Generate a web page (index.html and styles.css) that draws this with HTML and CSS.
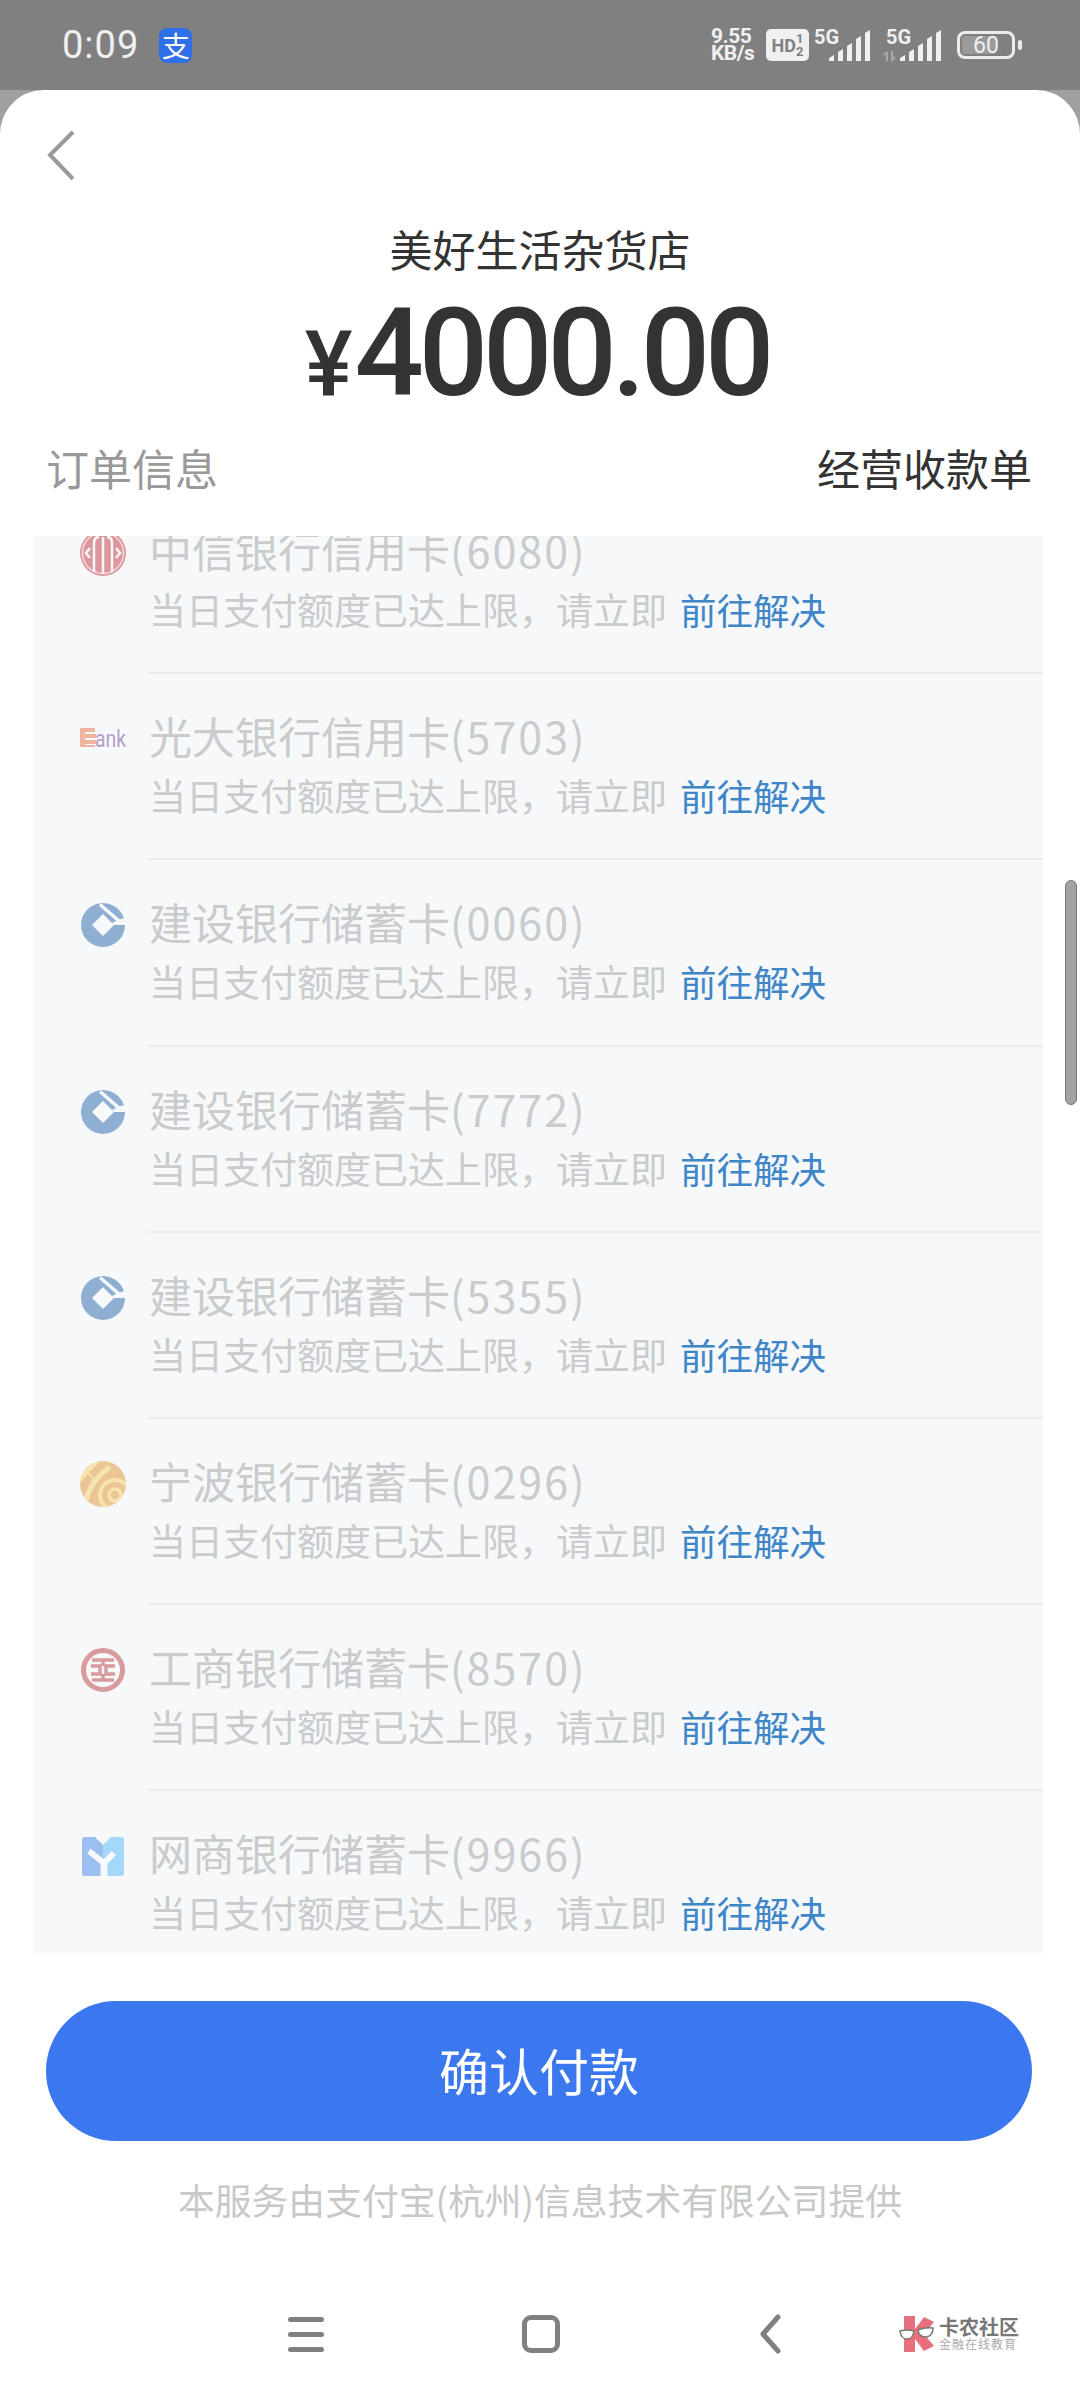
FILE: index.html
```html
<!DOCTYPE html>
<html lang="zh-CN">
<head>
    <meta charset="UTF-8">
    <meta name="viewport" content="width=device-width, initial-scale=1.0">
    <title>确认付款</title>
    <link rel="stylesheet" href="styles.css">
</head>
<body>
    <svg class="defs" width="0" height="0">
        <symbol id="ccb" viewBox="0 0 44 44">
            <circle cx="22" cy="22" r="22" fill="#8fafd2"/>
            <path d="M22 11 33 22 22 33 11 22Z" fill="#f7f8fa"/>
            <path d="M31 20 38 16.500 44 15V22H33Z" fill="#f7f8fa"/>
            <path d="M19 1.500 38 18" stroke="#f7f8fa" stroke-width="3.500" fill="none"/>
        </symbol>
        <clipPath id="nb-clip"><circle cx="23" cy="23" r="23"/></clipPath>
    </svg>

    <div class="status-bar">
        <span class="time">0:09</span>
        <span class="alipay">支</span>
        <div class="status-right">
            <div class="speed"><span>9.55</span><span>KB/s</span></div>
            <div class="hd"><span class="hd-text">HD</span><span class="hd-nums"><i>1</i><i>2</i></span></div>
            <svg class="signal" width="58" height="32" viewBox="0 0 58 32">
                <text x="0" y="15" class="five-g">5G</text>
                <path d="M15 32v-3l5-3v6zM24 32v-9l5-3v12zM33 32V17l5-3v18zM42 32V10l5-3v25zM51 32V4l5-3v31z" fill="#f0f0f0"/>
            </svg>
            <svg class="signal second" width="60" height="32" viewBox="0 0 60 32">
                <text x="3" y="15" class="five-g">5G</text>
                <path d="M4 32V23M1 26l3-3M9 22v9l3-3" stroke="#a8a8a8" stroke-width="2" fill="none"/>
                <path d="M17 32v-3l5-3v6zM26 32v-9l5-3v12zM35 32V17l5-3v18zM44 32V10l5-3v25zM53 32V4l5-3v31z" fill="#f0f0f0"/>
            </svg>
            <div class="battery">
                <div class="battery-body"><span>60</span></div>
                <div class="battery-nub"></div>
            </div>
        </div>
    </div>

    <div class="sheet">
        <div class="back-row">
            <svg width="30" height="50" viewBox="0 0 30 50"><path d="M27 2 4 25l23 24" stroke="#999" stroke-width="4" fill="none"/></svg>
        </div>
        <div class="shop">美好生活杂货店</div>
        <div class="amount"><span class="yen">¥</span>4000.00</div>
        <div class="order-row">
            <span class="order-label">订单信息</span>
            <span class="order-value">经营收款单</span>
        </div>

        <div class="list-wrap">
            <div class="list">
                <div class="row">
                    <svg class="bank-icon" width="46" height="46" viewBox="0 0 46 46">
                        <circle cx="23" cy="23" r="23" fill="#dd969d"/>
                        <circle cx="23" cy="23" r="20.500" stroke="#f3d8da" stroke-width="1.500" fill="none"/>
                        <path d="M14 42V13q0-6 5-6M23 44V7M32 42V13q0-6-5-6" stroke="#f7f8fa" stroke-width="2.500" fill="none"/>
                        <path d="M10 18 6 23l4 5M36 18l4 5-4 5" stroke="#f7f8fa" stroke-width="2.500" fill="none"/>
                    </svg>
                    <div class="row-text">
                        <div class="bank-name">中信银行信用卡<span class="card-no">(6080)</span></div>
                        <div class="bank-note">当日支付额度已达上限，请立即<span class="fix">前往解决</span></div>
                    </div>
                </div>
                <div class="row">
                    <svg class="bank-icon logo-wide" width="46" height="46" viewBox="0 0 46 46">
                        <path d="M0 12h15v4H5v2h11v4H5v2h11v4H5v1h10v2H0z" fill="#efb4a0"/>
                        <text x="15" y="31" class="bank-logo-text" textLength="31" lengthAdjust="spacingAndGlyphs">ank</text>
                    </svg>
                    <div class="row-text">
                        <div class="bank-name">光大银行信用卡<span class="card-no">(5703)</span></div>
                        <div class="bank-note">当日支付额度已达上限，请立即<span class="fix">前往解决</span></div>
                    </div>
                </div>
                <div class="row">
                    <svg class="bank-icon" width="46" height="46" viewBox="0 0 46 46"><use href="#ccb" x="1" y="1" width="44" height="44"/></svg>
                    <div class="row-text">
                        <div class="bank-name">建设银行储蓄卡<span class="card-no">(0060)</span></div>
                        <div class="bank-note">当日支付额度已达上限，请立即<span class="fix">前往解决</span></div>
                    </div>
                </div>
                <div class="row">
                    <svg class="bank-icon" width="46" height="46" viewBox="0 0 46 46"><use href="#ccb" x="1" y="1" width="44" height="44"/></svg>
                    <div class="row-text">
                        <div class="bank-name">建设银行储蓄卡<span class="card-no">(7772)</span></div>
                        <div class="bank-note">当日支付额度已达上限，请立即<span class="fix">前往解决</span></div>
                    </div>
                </div>
                <div class="row">
                    <svg class="bank-icon" width="46" height="46" viewBox="0 0 46 46"><use href="#ccb" x="1" y="1" width="44" height="44"/></svg>
                    <div class="row-text">
                        <div class="bank-name">建设银行储蓄卡<span class="card-no">(5355)</span></div>
                        <div class="bank-note">当日支付额度已达上限，请立即<span class="fix">前往解决</span></div>
                    </div>
                </div>
                <div class="row">
                    <svg class="bank-icon" width="46" height="46" viewBox="0 0 46 46">
                        <circle cx="23" cy="23" r="23" fill="#ecc596"/>
                        <g clip-path="url(#nb-clip)" fill="none" stroke="#f6e4ae">
                            <circle cx="35" cy="34" r="6" stroke-width="3.500"/>
                            <circle cx="35" cy="34" r="15" stroke-width="4"/>
                            <path d="M6 40Q10 20 30 6" stroke-width="5"/>
                            <path d="M-2 22Q6 10 20-2" stroke-width="4"/>
                            <path d="M2 6l14 14" stroke-width="2"/>
                        </g>
                    </svg>
                    <div class="row-text">
                        <div class="bank-name">宁波银行储蓄卡<span class="card-no">(0296)</span></div>
                        <div class="bank-note">当日支付额度已达上限，请立即<span class="fix">前往解决</span></div>
                    </div>
                </div>
                <div class="row">
                    <svg class="bank-icon" width="46" height="46" viewBox="0 0 46 46">
                        <circle cx="23" cy="23" r="19.500" stroke="#d99a9d" stroke-width="5" fill="none"/>
                        <path d="M12 13h22M12 33h22M23 13v6M23 27v6M11 19h9v8h-9M35 19h-9v8h9" stroke="#d99a9d" stroke-width="3.500" fill="none"/>
                    </svg>
                    <div class="row-text">
                        <div class="bank-name">工商银行储蓄卡<span class="card-no">(8570)</span></div>
                        <div class="bank-note">当日支付额度已达上限，请立即<span class="fix">前往解决</span></div>
                    </div>
                </div>
                <div class="row">
                    <svg class="bank-icon" width="46" height="46" viewBox="0 0 46 46">
                        <path d="M5 4h10l8 8v31H5a3 3 0 0 1-3-3V7a3 3 0 0 1 3-3z" fill="#9abff0"/>
                        <path d="M41 4H31l-8 8v31h18a3 3 0 0 0 3-3V7a3 3 0 0 0-3-3z" fill="#a3d8f8"/>
                        <path d="M9 18 24 30 34 20" stroke="#f7f8fa" stroke-width="6" fill="none"/>
                        <path d="M24 29v14" stroke="#f7f8fa" stroke-width="7"/>
                    </svg>
                    <div class="row-text">
                        <div class="bank-name">网商银行储蓄卡<span class="card-no">(9966)</span></div>
                        <div class="bank-note">当日支付额度已达上限，请立即<span class="fix">前往解决</span></div>
                    </div>
                </div>
            </div>
            <div class="scroll-thumb"></div>
        </div>

        <button class="pay-btn">确认付款</button>
        <div class="provider">本服务由支付宝(杭州)信息技术有限公司提供</div>

        <div class="nav-bar">
            <div class="nav-menu"><i></i><i></i><i></i></div>
            <div class="nav-home"></div>
            <svg class="nav-back" width="22" height="40" viewBox="0 0 22 40"><path d="M19 3 4 20l15 17" stroke="#808080" stroke-width="5" stroke-linecap="round" stroke-linejoin="round" fill="none"/></svg>
            <div class="watermark">
                <svg width="36" height="36" viewBox="0 0 36 36">
                    <path d="M5 0h11v13l9-12 10 5-10 12 10 12-10 5-9-12v13H5z" fill="#e8707e"/>
                    <path d="M1 15q7-2 14 0-1 8-7 8-6 0-7-8zM19 14q7-3 15-2 0 8-7 9-7 0-8-7z" fill="#fff" stroke="#777" stroke-width="1.500"/>
                </svg>
                <div class="watermark-text">
                    <span class="wm-title">卡农社区</span>
                    <span class="wm-sub">金融在线教育</span>
                </div>
            </div>
        </div>
    </div>
</body>
</html>
```

FILE: styles.css
```css
* {
    box-sizing: border-box;
}
body {
    margin: 0;
    width: 1080px;
    height: 2400px;
    overflow: hidden;
    background: #a0a0a0;
    font-family: "Noto Sans CJK SC", "Noto Sans", sans-serif;
    color: #333;
}
.defs {
    display: block;
    height: 0;
}

/* status bar */
.status-bar {
    display: flex;
    align-items: center;
    height: 90px;
    padding: 0 58px 0 62px;
    background: #808080;
    color: #f0f0f0;
    font-family: Roboto, sans-serif;
}
.time {
    font-size: 38px;
    letter-spacing: 1px;
}
.alipay {
    display: flex;
    align-items: center;
    justify-content: center;
    width: 33px;
    height: 35px;
    margin-left: 20px;
    border-radius: 8px;
    background: #2f6fe8;
    color: #fff;
    font-family: "Noto Sans CJK SC", sans-serif;
    font-size: 28px;
    line-height: 35px;
}
.status-right {
    display: flex;
    align-items: center;
    margin-left: auto;
}
.speed {
    display: flex;
    flex-direction: column;
    width: 52px;
    margin-right: 3px;
    font-size: 21px;
    font-weight: 700;
    line-height: 17px;
    letter-spacing: -0.5px;
}
.hd {
    display: flex;
    align-items: center;
    justify-content: center;
    width: 43px;
    height: 32px;
    border-radius: 5px;
    background: #f0f0f0;
    color: #808080;
    font-weight: 700;
}
.hd-text {
    font-size: 18px;
}
.hd-nums {
    display: flex;
    flex-direction: column;
    font-size: 13px;
    line-height: 13px;
}
.hd-nums i {
    font-style: normal;
}
.signal {
    margin-left: 5px;
    overflow: visible;
}
.signal.second {
    margin-left: 11px;
}
.five-g {
    font-family: Roboto, sans-serif;
    font-size: 20px;
    font-weight: 700;
    fill: #f0f0f0;
}
.battery {
    display: flex;
    align-items: center;
    margin-left: 14px;
}
.battery-body {
    display: flex;
    align-items: center;
    justify-content: center;
    width: 58px;
    height: 28px;
    border: 3px solid #ececec;
    border-radius: 8px;
    font-size: 23px;
    background: linear-gradient(90deg, #9a9a9a 68%, transparent 68%);
    background-clip: content-box;
    padding: 2px;
}
.battery-nub {
    width: 4px;
    height: 10px;
    margin-left: 3px;
    border-radius: 2px;
    background: #ececec;
}

/* sheet */
.sheet {
    height: 2310px;
    border-radius: 44px 44px 0 0;
    background: #fff;
}
.back-row {
    height: 128px;
    padding: 40px 0 0 46px;
}
.shop {
    height: 60px;
    font-size: 43px;
    line-height: 60px;
    text-align: center;
}
.amount {
    height: 120px;
    margin-top: 16px;
    padding-right: 6px;
    font-family: Roboto, sans-serif;
    font-size: 122px;
    font-weight: 500;
    line-height: 120px;
    letter-spacing: -5px;
    text-align: center;
}
.yen {
    margin-right: 2px;
    font-size: 90px;
    font-weight: 500;
    letter-spacing: 0;
}
.order-row {
    display: flex;
    justify-content: space-between;
    height: 63px;
    margin-top: 23px;
    padding: 0 48px 0 46px;
    font-size: 43px;
    line-height: 60px;
}
.order-label {
    color: #999;
}

/* bank list */
.list-wrap {
    position: relative;
    height: 1417px;
    margin-top: 36px;
}
.list {
    width: 1009px;
    height: 100%;
    margin-left: 34px;
    overflow: hidden;
    background: #f7f8fa;
}
.row {
    display: flex;
    align-items: flex-start;
    padding-left: 46px;
}
.row:first-child {
    margin-top: -48px;
}
.bank-icon {
    flex: none;
    margin: 42px 22px 0 0;
}
.logo-wide {
    overflow: visible;
}
.row-text {
    flex: 1;
    padding: 33px 0 33.2px 1px;
    border-bottom: 2px solid #e9ebee;
}
.row:last-child .row-text {
    border-bottom: none;
}
.bank-name {
    height: 58px;
    font-size: 43px;
    line-height: 56px;
    color: #c9cbcd;
}
.card-no {
    letter-spacing: 2px;
}
.bank-note {
    height: 60px;
    font-size: 37px;
    line-height: 60px;
    color: #c9cbcd;
}
.fix {
    margin-left: 13px;
    font-size: 36.500px;
    color: #3f86c8;
}
.scroll-thumb {
    position: absolute;
    top: 344px;
    left: 1065px;
    width: 12px;
    height: 225px;
    border-radius: 6px;
    border: 1px solid #777;
    background: #a3a3a3;
}

/* bottom */
.pay-btn {
    display: block;
    width: 986px;
    height: 140px;
    margin: 48px 0 0 46px;
    padding: 0 0 4px;
    border: none;
    border-radius: 70px;
    background: #3b78f0;
    color: #fff;
    font-family: inherit;
    font-size: 50px;
}
.provider {
    height: 53px;
    margin-top: 33px;
    font-size: 36.800px;
    line-height: 50px;
    color: #c8c8c8;
    text-align: center;
}
.nav-bar {
    display: flex;
    align-items: center;
    height: 44px;
    margin-top: 85px;
    padding-left: 288px;
}
.nav-menu {
    display: flex;
    flex-direction: column;
    gap: 10px;
    width: 36px;
}
.nav-menu i {
    height: 5px;
    border-radius: 3px;
    background: #808080;
}
.nav-home {
    width: 38px;
    height: 38px;
    margin-left: 198px;
    border: 5px solid #808080;
    border-radius: 9px;
}
.nav-back {
    margin-left: 199px;
}
.watermark {
    display: flex;
    align-items: center;
    gap: 4px;
    margin-left: 118px;
}
.watermark-text {
    display: flex;
    flex-direction: column;
}
.wm-title {
    font-size: 20px;
    font-weight: 700;
    line-height: 20px;
    color: #777;
}
.wm-sub {
    font-size: 12px;
    line-height: 14px;
    letter-spacing: 1px;
    color: #aaa;
}
.bank-logo-text {
    font-family: Roboto, sans-serif;
    font-size: 24px;
    fill: #b79ccd;
}
```
